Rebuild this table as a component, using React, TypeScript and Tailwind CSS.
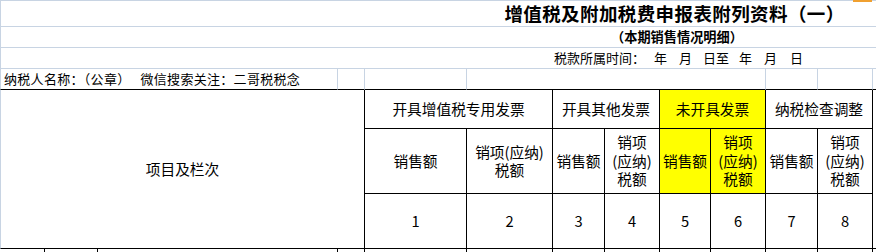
import React from 'react';

const light = 'border-[#c8d4e3]';

function Sub({ lines, yellow }: { lines: string[]; yellow?: boolean }) {
  return (
    <div
      className={`flex flex-col items-center justify-center border-r border-b border-black leading-[18.5px] ${
        yellow ? 'bg-[#ffff00]' : ''
      }`}
    >
      {lines.map((l) => (
        <span key={l} className="h-[18.5px]">
          {l}
        </span>
      ))}
    </div>
  );
}

function Num({ n }: { n: string }) {
  return <div className="flex items-center justify-center border-r border-b border-black">{n}</div>;
}

export default function App() {
  return (
    <div className="relative w-[876px] h-[252px] overflow-hidden bg-white text-black font-['Noto_Sans_CJK_SC',sans-serif]">
      {/* selected cell marker */}
      <div className="absolute top-0 left-[853px] w-[19px] h-[2px] bg-[#f0a030]" />

      <div className="grid grid-cols-[45px_53px_240px_27px_102px_86px_52px_55px_51px_55px_52px_55px_3px] grid-rows-[27px_21px_21px_21px_39px_65px_55px_3px]">
        {/* title */}
        <div className={`col-span-5 border-t border-b border-l ${light}`} />
        <div className={`col-span-8 flex items-center justify-center pl-[6px] border-t border-b ${light}`}>
          <span className="text-[18.5px] font-bold tracking-[0.4px]">增值税及附加税费申报表附列资料（一）</span>
        </div>

        {/* subtitle */}
        <div className={`col-span-5 border-b border-l ${light}`} />
        <div className={`col-span-8 flex items-center justify-center pl-[11px] border-b ${light}`}>
          <span className="text-[13.2px] font-bold">（本期销售情况明细）</span>
        </div>

        {/* period */}
        <div className={`col-span-6 border-b border-l ${light}`} />
        <div className={`col-span-7 flex items-center pl-[1px] text-[13px] border-b ${light}`}>
          <span>税款所属时间：</span>
          <span className="ml-[9px]">年</span>
          <span className="ml-[12px]">月</span>
          <span className="ml-[11px]">日至</span>
          <span className="ml-[10px]">年</span>
          <span className="ml-[12px]">月</span>
          <span className="ml-[13px]">日</span>
        </div>

        {/* taxpayer row */}
        <div className={`col-span-3 flex items-center pl-[3px] text-[13px] tracking-[0.3px] border-l ${light} border-r border-b border-b-black`}>
          <span>纳税人名称：（公章）</span>
          <span className="ml-[10px]">微信搜索关注：二哥税税念</span>
        </div>
        <div className={`border-r ${light} border-b border-b-black`} />
        <div className={`border-r ${light} border-b border-b-black`} />
        <div className={`col-span-5 border-r ${light} border-b border-b-black`} />
        <div className={`border-r ${light} border-b border-b-black`} />
        <div className={`border-r ${light} border-b border-b-black`} />
        <div className="border-b border-black" />

        {/* header */}
        <div
          className={`col-span-4 row-span-3 flex items-center justify-center text-[14.7px] border-l ${light} border-r border-b border-r-black border-b-black`}
        >
          项目及栏次
        </div>
        <div className="col-span-2 flex items-center justify-center text-[14.7px] border-r border-b border-black">
          开具增值税专用发票
        </div>
        <div className="col-span-2 flex items-center justify-center text-[14.7px] border-r border-b border-black">
          开具其他发票
        </div>
        <div className="col-span-2 flex items-center justify-center text-[14.7px] bg-[#ffff00] border-r border-b border-black">
          未开具发票
        </div>
        <div className="col-span-2 flex items-center justify-center text-[14.7px] border-r border-b border-black">
          纳税检查调整
        </div>
        <div className="row-span-3 border-b border-black" />

        <div className="contents text-[14.7px]">
          <Sub lines={['销售额']} />
          <Sub lines={['销项(应纳)', '税额']} />
          <Sub lines={['销售额']} />
          <Sub lines={['销项', '(应纳)', '税额']} />
          <Sub lines={['销售额']} yellow />
          <Sub lines={['销项', '(应纳)', '税额']} yellow />
          <Sub lines={['销售额']} />
          <Sub lines={['销项', '(应纳)', '税额']} />

          {['1', '2', '3', '4', '5', '6', '7', '8'].map((n) => (
            <Num key={n} n={n} />
          ))}
        </div>

        {/* next row start */}
        {Array.from({ length: 12 }).map((_, i) => (
          <div key={i} className="border-r border-black" />
        ))}
        <div />
      </div>
    </div>
  );
}
